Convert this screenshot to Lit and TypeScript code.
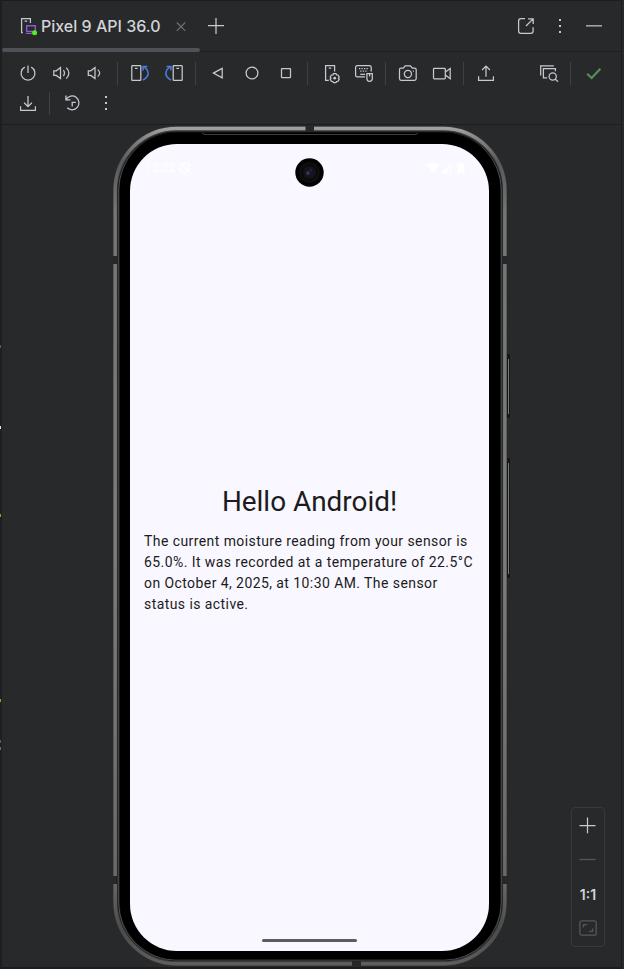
import { LitElement, html, css, svg, TemplateResult } from "lit";
import { customElement, property } from "lit/decorators.js";

const speaker = svg`<path d="M1.8 7.8H4.3L8.5 4.6V15.6L4.3 12.4H1.8Z"/>`;

const icons: Record<string, TemplateResult> = {
  power: svg`<path d="M6.8 4.1A6.9 6.9 0 1 0 13.2 4.1M10 2.4V10"/>`,
  volumeUp: svg`${speaker}<path d="M11.4 7.2Q13.6 10.1 11.4 13M14.2 4.6Q19.6 10.1 14.2 15.6"/>`,
  volumeDown: svg`<g transform="translate(.5 0)">${speaker}<path d="M11.2 6.6Q15.2 10.1 11.2 13.6"/></g>`,
  rotateLeft: svg`<rect x="1.8" y="2.7" width="9" height="14.6" rx=".6"/><path d="M5 5.4H7.6"/><path class="blue" d="M13 17.2Q18.9 13.6 18.1 9.4Q17.4 6 13.8 3.6M13.1 7.4V3.4H17.4"/>`,
  rotateRight: svg`<rect x="9.2" y="2.7" width="9" height="14.6" rx=".6"/><path d="M12.4 5.4H15"/><path class="blue" d="M7 17.2Q1.1 13.6 1.9 9.4Q2.6 6 6.2 3.6M6.9 7.4V3.4H2.6"/>`,
  back: svg`<path d="M14.2 5.4V14.9L5.4 10.1Z"/>`,
  home: svg`<circle cx="10" cy="10" r="5.9"/>`,
  overview: svg`<rect x="5.5" y="5.5" width="9" height="9" rx=".4"/>`,
  deviceSettings: svg`<path d="M8.8 17.4H5.6V2.7H14.6V8.6M8.8 5.2H11.2"/><path d="M13.5 10.6H16L16.6 11.9L18 12L19.2 14L18.4 15.2L19.2 16.3L18 18.4L16.6 18.5L16 19.7H13.5L12.8 18.5L11.4 18.4L10.2 16.3L11 15.2L10.2 14L11.4 12L12.8 11.9Z"/><circle class="fill" cx="14.7" cy="15.2" r="1.4"/>`,
  keyboard: svg`<path d="M11 13.9H3.2Q1.6 13.9 1.6 12.3V4.3Q1.6 2.7 3.2 2.7H15.4Q17.2 2.7 17.2 4.3V8.6M6.3 11.4H11"/><path stroke-width="1.3" stroke-dasharray="1.3 1.2" d="M5 5.6H14.8M6.2 8.2H13.8"/><path d="M12.9 10.5H18.3V15.6Q18.3 18.4 15.6 18.4Q12.9 18.4 12.9 15.6ZM15.6 10.5V13.6"/>`,
  camera: svg`<path d="M2.8 5.2H5.4L7.2 2.9H12.5L14.3 5.2H16.6Q18.2 5.2 18.2 6.8V15.6Q18.2 17.3 16.6 17.3H3Q1.5 17.3 1.5 15.6V6.8Q1.5 5.2 2.8 5.2Z"/><circle cx="9.9" cy="10.9" r="3.6"/><path d="M14.8 8H15.8"/>`,
  video: svg`<rect x="1.5" y="5.3" width="11.8" height="10.6" rx=".8"/><path d="M13.4 9.1L18.2 5.4V15.8L13.4 12.1"/>`,
  share: svg`<path d="M2.6 13.2V17.3H17.4V13.2M10 13.8V3.2M6.1 7L10 3.1L13.9 7"/>`,
  inspect: svg`<path d="M1.7 12.6V2.8H14.8M8.2 14.8H4.4V5.6H16.4V8.2"/><circle cx="13.7" cy="13.4" r="3.6"/><path d="M16.2 16L19 18.7"/>`,
  check: svg`<path class="green" d="M4.2 10.7L8.6 15L17.4 5.7"/>`,
  download: svg`<path d="M2.6 13.2V17.3H17.4V13.2M10 3V13.4M6.1 9.7L10 13.6L13.9 9.7"/>`,
  reset: svg`<path d="M4.2 6.2A6.9 6.9 0 1 1 5.2 14.8M3.9 2.6V6.9H8.4M10.2 13.4V9.4H13.8"/>`,
  kebab: svg`<g class="fill"><rect x="9" y="3" width="2" height="2"/><rect x="9" y="9" width="2" height="2"/><rect x="9" y="15" width="2" height="2"/></g>`,
  device: svg`<path d="M4.8 16.5H3.6V2.6H12.4V7M6.6 5.2H9.2"/><path class="purple" d="M8.7 9.7H17.3V15.4H8.7ZM7.8 17.4H14.4"/><circle class="online" cx="16.6" cy="16.7" r="2.5"/>`,
  close: svg`<path class="dim" d="M5.8 6.5L14.2 14.9M14.2 6.5L5.8 14.9"/>`,
  plus: svg`<path d="M11 2V18M3 9.5H19"/>`,
  popout: svg`<path d="M9 2.7H4.9Q2.6 2.7 2.6 5V15Q2.6 17.3 4.9 17.3H14.8Q17.1 17.3 17.1 15V11.2M10 10L16.9 3.1M12.1 2.8H17.2V8"/>`,
  hide: svg`<path stroke-width="1.6" d="M2 9.8H18" opacity=".75"/>`,
  zoomIn: svg`<path d="M9.5 1.4V17.2M1.5 9.5H17.5"/>`,
  zoomOut: svg`<path class="faint" d="M1.4 9.5H17.6"/>`,
  fit: svg`<g class="faint"><rect x="1.9" y="2.8" width="16.3" height="14.4" rx="2"/><path d="M5.5 9.6V6.7H9.2M11 13.4H14.8V10.4"/></g>`,
};

@customElement("tool-icon")
class ToolIcon extends LitElement {
  @property() name = "";
  static styles = css`
    :host { display: flex; align-items: center; justify-content: center; flex: none; width: 34px; height: 30px; }
    svg { display: block; width: 20px; height: 20px; overflow: visible; fill: none; stroke: #c6c9d0; stroke-width: 1.25; }
    .blue { stroke: #4a7de0; stroke-width: 1.5; }
    .green { stroke: #549159; stroke-width: 2.1; }
    .purple { stroke: #8a5bd0; stroke-width: 1.4; }
    .online { fill: #4ff01c; stroke: none; }
    .fill { fill: #c6c9d0; stroke: none; }
    .dim { stroke: #6c6f75; }
    .faint { stroke: #55575b; stroke-width: 1.3; }
  `;
  render() {
    return html`<svg viewBox="0 0 20 20">${icons[this.name]}</svg>`;
  }
}

@customElement("phone-device")
class PhoneDevice extends LitElement {
  static styles = css`
    :host { display: grid; width: 400px; height: 844px; font-family: Roboto, "Liberation Sans", sans-serif; }
    .body, .screen { grid-area: 1 / 1; }
    .body { display: block; width: 400px; height: 844px; }
    .screen { margin: 19px 0 0 17px; width: 359px; height: 807px; box-sizing: border-box; border-radius: 47px; background: #f9f7ff; color: #1b1b20; display: flex; flex-direction: column; position: relative; }
    .status { display: flex; align-items: center; justify-content: space-between; height: 47px; padding: 0 24px 0 15px; color: #fff; font-size: 12.2px; }
    .clock { display: flex; align-items: center; gap: 4px; }
    .status svg { display: block; }
    .camera { position: absolute; left: 165px; top: 14px; width: 29px; height: 29px; }
    .content { flex: 1; display: flex; flex-direction: column; padding: 293px 0 0 14px; }
    h1 { margin: 0 14px 12px 0; font-weight: 400; font-size: 27.9px; line-height: 35px; text-align: center; }
    p { margin: 0; font-size: 13.97px; line-height: 21px; letter-spacing: .437px; white-space: nowrap; }
    .handle { width: 95px; height: 3px; border-radius: 2px; background: #5d5b60; margin: 0 auto 9px; }
  `;
  render() {
    return html`
      <svg class="body" viewBox="113 125 400 844">
        <defs>
          <linearGradient id="metal" x1="0" y1="0" x2="0" y2="1">
            <stop offset="0" stop-color="#a0a09f"/>
            <stop offset=".012" stop-color="#858585"/>
            <stop offset=".04" stop-color="#58595a"/>
            <stop offset=".1" stop-color="#747575"/>
            <stop offset=".5" stop-color="#7c7c7c"/>
            <stop offset=".9" stop-color="#696969"/>
            <stop offset=".96" stop-color="#4b4b4b"/>
            <stop offset="1" stop-color="#5e5e5e"/>
          </linearGradient>
        </defs>
        <g fill="#151617">
          <rect x="507" y="354" width="3" height="64" rx="1"/>
          <rect x="507" y="458" width="3" height="120" rx="1"/>
        </g>
        <g fill="#777978">
          <rect x="508" y="359" width="1" height="55"/>
          <rect x="508" y="463" width="1" height="111"/>
        </g>
        <rect x="113" y="126" width="394" height="840" rx="64" fill="#3a3b3c"/>
        <rect x="115.2" y="128.5" width="389.6" height="835.2" rx="61.8" fill="none" stroke="url(#metal)" stroke-width="3.4"/>
        <rect x="117.5" y="131.5" width="385" height="829.5" rx="59" fill="#171818"/>
        <rect x="118.7" y="133" width="382.6" height="827" rx="57" fill="none" stroke="#5b5d5c" stroke-width=".8"/>
        <rect x="119.8" y="132.2" width="380.4" height="827.3" rx="57" fill="#000"/>
        <path d="M202 133.2L205 134.5H415L418 133.2" fill="none" stroke="#4a4d4b" stroke-width=".8"/>
        <g fill="#262728">
          <rect x="305.5" y="126" width="8.5" height="6"/>
          <rect x="352" y="961" width="9" height="5"/>
          <rect x="112.5" y="256" width="5.5" height="8"/>
          <rect x="502" y="256" width="5.5" height="8"/>
          <rect x="112.5" y="876" width="5.5" height="8"/>
          <rect x="502" y="876" width="5.5" height="8"/>
        </g>
      </svg>
      <div class="screen">
        <div class="status">
          <span class="clock">12:22
            <svg width="11" height="12" viewBox="0 0 11 12" fill="none" stroke="#fff" stroke-width="1.4"><path d="M5.5 1L10 2.6V6Q10 9.6 5.5 11Q1 9.6 1 6V2.6ZM2 2L9 10"/></svg>
          </span>
          <svg width="38" height="12" viewBox="0 0 38 12" fill="#fff"><path d="M0 3Q6 -2 12.5 3L6.3 11.5ZM13.5 11.5L24 1V11.5ZM30.5 2H32.5V.5H35.5V2H37.5V11.5H30.5Z"/><path d="M20.6 6.4L23 4V10.5H20.6Z" fill="#f9f7ff"/></svg>
        </div>
        <svg class="camera" viewBox="0 0 29 29">
          <circle cx="14.5" cy="14.5" r="14.2" fill="#030303"/>
          <circle cx="14.5" cy="14.5" r="10.5" fill="#0e0e0f"/>
          <circle cx="14.5" cy="14.5" r="7.2" fill="#131315" stroke="#060607"/>
          <circle cx="14.8" cy="14.8" r="4.4" fill="#15141f"/>
          <circle cx="13" cy="15" r="1.9" fill="#34364a"/>
          <circle cx="16.4" cy="14.8" r="1.8" fill="#1d0f42"/>
          <circle cx="16" cy="11.8" r=".9" fill="#2d2a70"/>
        </svg>
        <div class="content">
          <h1>Hello Android!</h1>
          <p>The current moisture reading from your sensor is<br>65.0%. It was recorded at a temperature of 22.5°C<br>on October 4, 2025, at 10:30 AM. The sensor<br>status is active.</p>
        </div>
        <div class="handle"></div>
      </div>
    `;
  }
}

@customElement("app-root")
class AppRoot extends LitElement {
  static styles = css`
    :host { display: flex; box-sizing: border-box; width: 624px; height: 969px; background: #28292b; overflow: hidden; font-family: Inter, "Liberation Sans", sans-serif; color: #d2d4d9; }
    .gutter { flex: none; width: 2px; background: #1e1f22; position: relative; }
    .mark { position: absolute; left: 0; width: 1px; height: 3px; }
    .panel { flex: none; box-sizing: border-box; width: 620px; display: flex; flex-direction: column; border: solid #1c1d1f; border-width: 1px 1px 2px 0; }
    .header { flex: none; display: flex; align-items: center; height: 51px; box-sizing: border-box; border-bottom: 1px solid #1d1e20; position: relative; }
    .underline { position: absolute; left: 0; top: 47px; width: 198px; height: 4px; border-radius: 2px; background: #4f5157; }
    .tab-icon { width: 20px; margin-left: 16px; }
    .title { font-size: 16px; font-weight: 500; line-height: 20px; margin-left: 3px; width: 123px; white-space: nowrap; }
    .spacer { flex: 1; }
    .tools { flex: none; height: 73px; box-sizing: border-box; padding: 6px 11px 6px 9px; border-bottom: 1px solid #1c1d1f; display: flex; flex-direction: column; }
    .row { display: flex; height: 30px; align-items: center; }
    .sep { flex: none; width: 1px; height: 23px; margin: 0 5px 0 4px; background: #3e4044; }
    .stage { flex: 1; min-height: 0; display: flex; align-items: flex-end; overflow: hidden; }
    phone-device { flex: none; align-self: flex-start; margin-left: 111px; }
    .zoom { box-sizing: border-box; width: 34px; height: 140px; margin: 0 16px 20px auto; border: 1px solid #38393c; border-radius: 4px; display: flex; flex-direction: column; align-items: center; justify-content: space-between; padding: 3px 0; }
    .zoom b { font-size: 14px; font-weight: 600; line-height: 20px; margin: 5px 0 4px; }
  `;
  render() {
    const tool = (name: string) =>
      name === "|" ? html`<span class="sep"></span>` : html`<tool-icon name=${name}></tool-icon>`;
    const marks: [number, string][] = [
      [345, "#7b4f68"], [426, "#f6e5a5"], [514, "#bb8b2c"], [699, "#b8902e"], [740, "#5d6063"], [747, "#6d7073"],
    ];
    return html`
      <div class="gutter">${marks.map(([y, c]) => html`<i class="mark" style="top:${y}px;background:${c}"></i>`)}</div>
      <div class="panel">
        <div class="header">
          <tool-icon class="tab-icon" name="device"></tool-icon>
          <span class="title">Pixel 9 API 36.0</span>
          ${tool("close")}${tool("plus")}
          <span class="spacer"></span>
          ${tool("popout")}${tool("kebab")}${tool("hide")}
          <span style="width:10px"></span>
          <span class="underline"></span>
        </div>
        <div class="tools">
          <div class="row">
            ${["power", "volumeUp", "volumeDown", "|", "rotateLeft", "rotateRight", "|", "back", "home", "overview", "|", "deviceSettings", "keyboard", "|", "camera", "video", "|", "share"].map(tool)}
            <span class="spacer"></span>
            ${["inspect", "|", "check"].map(tool)}
          </div>
          <div class="row">${["download", "|", "reset", "kebab"].map(tool)}</div>
        </div>
        <div class="stage">
          <phone-device></phone-device>
          <div class="zoom">
            ${tool("zoomIn")}${tool("zoomOut")}
            <b>1:1</b>
            ${tool("fit")}
          </div>
        </div>
      </div>
    `;
  }
}
